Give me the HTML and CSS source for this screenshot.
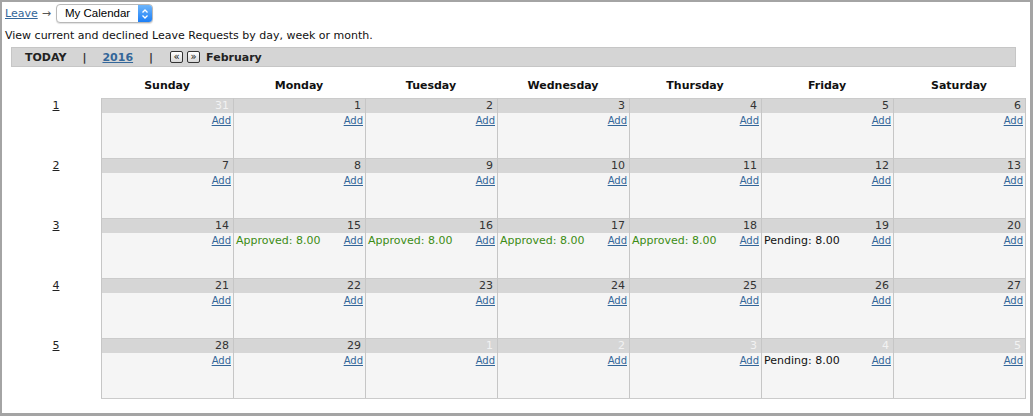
FILE: index.html
```html
<!DOCTYPE html>
<html>
<head>
<meta charset="utf-8">
<link rel="stylesheet" href="styles.css">
</head>
<body>
<div class="frame">
  <div class="crumbs">
    <a href="#" class="link">Leave</a>
    <span class="arrow">→</span>
    <span class="select-wrap">
      <select class="select"><option>My Calendar</option></select>
      <span class="stepper">
        <svg width="14" height="16" viewBox="0 0 14 16"><path d="M4.5 6.5 L7 4 L9.5 6.5" fill="none" stroke="#fff" stroke-width="1.3"/><path d="M4.5 9.5 L7 12 L9.5 9.5" fill="none" stroke="#fff" stroke-width="1.3"/></svg>
      </span>
    </span>
  </div>
  <div class="desc">View current and declined Leave Requests by day, week or month.</div>
  <div class="navbar">
    <span class="nav-item">TODAY</span>
    <span class="pipe">|</span>
    <a href="#" class="nav-item year">2016</a>
    <span class="pipe">|</span>
    <span class="nav-btns">
      <span class="nbtn">«</span>
      <span class="nbtn">»</span>
    </span>
    <span class="nav-item month">February</span>
  </div>

  <div class="cal">
    <div class="row head">
      <div class="wk"></div>
      <div class="days heads">
        <div class="dname">Sunday</div>
        <div class="dname">Monday</div>
        <div class="dname">Tuesday</div>
        <div class="dname">Wednesday</div>
        <div class="dname">Thursday</div>
        <div class="dname">Friday</div>
        <div class="dname">Saturday</div>
      </div>
    </div>

    <div class="row">
      <div class="wk"><a href="#" class="wlink">1</a></div>
      <div class="days">
        <div class="day"><div class="bar other">31</div><div class="body"><span></span><a href="#" class="add">Add</a></div></div>
        <div class="day"><div class="bar">1</div><div class="body"><span></span><a href="#" class="add">Add</a></div></div>
        <div class="day"><div class="bar">2</div><div class="body"><span></span><a href="#" class="add">Add</a></div></div>
        <div class="day"><div class="bar">3</div><div class="body"><span></span><a href="#" class="add">Add</a></div></div>
        <div class="day"><div class="bar">4</div><div class="body"><span></span><a href="#" class="add">Add</a></div></div>
        <div class="day"><div class="bar">5</div><div class="body"><span></span><a href="#" class="add">Add</a></div></div>
        <div class="day"><div class="bar">6</div><div class="body"><span></span><a href="#" class="add">Add</a></div></div>
      </div>
    </div>

    <div class="row">
      <div class="wk"><a href="#" class="wlink">2</a></div>
      <div class="days">
        <div class="day"><div class="bar">7</div><div class="body"><span></span><a href="#" class="add">Add</a></div></div>
        <div class="day"><div class="bar">8</div><div class="body"><span></span><a href="#" class="add">Add</a></div></div>
        <div class="day"><div class="bar">9</div><div class="body"><span></span><a href="#" class="add">Add</a></div></div>
        <div class="day"><div class="bar">10</div><div class="body"><span></span><a href="#" class="add">Add</a></div></div>
        <div class="day"><div class="bar">11</div><div class="body"><span></span><a href="#" class="add">Add</a></div></div>
        <div class="day"><div class="bar">12</div><div class="body"><span></span><a href="#" class="add">Add</a></div></div>
        <div class="day"><div class="bar">13</div><div class="body"><span></span><a href="#" class="add">Add</a></div></div>
      </div>
    </div>

    <div class="row">
      <div class="wk"><a href="#" class="wlink">3</a></div>
      <div class="days">
        <div class="day"><div class="bar">14</div><div class="body"><span></span><a href="#" class="add">Add</a></div></div>
        <div class="day"><div class="bar">15</div><div class="body"><span class="approved">Approved: 8.00</span><a href="#" class="add">Add</a></div></div>
        <div class="day"><div class="bar">16</div><div class="body"><span class="approved">Approved: 8.00</span><a href="#" class="add">Add</a></div></div>
        <div class="day"><div class="bar">17</div><div class="body"><span class="approved">Approved: 8.00</span><a href="#" class="add">Add</a></div></div>
        <div class="day"><div class="bar">18</div><div class="body"><span class="approved">Approved: 8.00</span><a href="#" class="add">Add</a></div></div>
        <div class="day"><div class="bar">19</div><div class="body"><span class="pending">Pending: 8.00</span><a href="#" class="add">Add</a></div></div>
        <div class="day"><div class="bar">20</div><div class="body"><span></span><a href="#" class="add">Add</a></div></div>
      </div>
    </div>

    <div class="row">
      <div class="wk"><a href="#" class="wlink">4</a></div>
      <div class="days">
        <div class="day"><div class="bar">21</div><div class="body"><span></span><a href="#" class="add">Add</a></div></div>
        <div class="day"><div class="bar">22</div><div class="body"><span></span><a href="#" class="add">Add</a></div></div>
        <div class="day"><div class="bar">23</div><div class="body"><span></span><a href="#" class="add">Add</a></div></div>
        <div class="day"><div class="bar">24</div><div class="body"><span></span><a href="#" class="add">Add</a></div></div>
        <div class="day"><div class="bar">25</div><div class="body"><span></span><a href="#" class="add">Add</a></div></div>
        <div class="day"><div class="bar">26</div><div class="body"><span></span><a href="#" class="add">Add</a></div></div>
        <div class="day"><div class="bar">27</div><div class="body"><span></span><a href="#" class="add">Add</a></div></div>
      </div>
    </div>

    <div class="row last">
      <div class="wk"><a href="#" class="wlink">5</a></div>
      <div class="days">
        <div class="day"><div class="bar">28</div><div class="body"><span></span><a href="#" class="add">Add</a></div></div>
        <div class="day"><div class="bar">29</div><div class="body"><span></span><a href="#" class="add">Add</a></div></div>
        <div class="day"><div class="bar other">1</div><div class="body"><span></span><a href="#" class="add">Add</a></div></div>
        <div class="day"><div class="bar other">2</div><div class="body"><span></span><a href="#" class="add">Add</a></div></div>
        <div class="day"><div class="bar other">3</div><div class="body"><span></span><a href="#" class="add">Add</a></div></div>
        <div class="day"><div class="bar other">4</div><div class="body"><span class="pending">Pending: 8.00</span><a href="#" class="add">Add</a></div></div>
        <div class="day"><div class="bar other">5</div><div class="body"><span></span><a href="#" class="add">Add</a></div></div>
      </div>
    </div>
  </div>
</div>
</body>
</html>
```

FILE: styles.css
```css
html, body {
  margin: 0;
  padding: 0;
  background: #ffffff;
}

body {
  font-family: "DejaVu Sans", Verdana, sans-serif;
  font-size: 11px;
  color: #111;
}

.frame {
  box-sizing: border-box;
  width: 1033px;
  height: 416px;
  border-style: solid;
  border-color: #a4a4a4;
  border-width: 2px 3px 3px 2px;
  padding: 2px 0 0 3px;
  overflow: hidden;
}

.crumbs {
  display: flex;
  align-items: center;
  height: 19px;
}

.link {
  color: #336699;
  text-decoration: underline;
  font-size: 11px;
}

.arrow {
  color: #555;
  font-size: 11px;
  margin: 0 5px 0 4px;
}

.select-wrap {
  position: relative;
  display: inline-block;
  height: 19px;
}

.select {
  -webkit-appearance: none;
  appearance: none;
  box-sizing: border-box;
  width: 97px;
  height: 19px;
  margin: 0;
  padding: 0 0 0 8px;
  border: 1px solid #b8b8b8;
  border-radius: 4px;
  background: #fff;
  box-shadow: 0 1px 1px rgba(0, 0, 0, 0.12);
  font-family: "Liberation Sans", Arial, sans-serif;
  font-size: 11.5px;
  color: #000;
  line-height: 17px;
}

.stepper {
  position: absolute;
  top: 1px;
  right: 1px;
  bottom: 1px;
  width: 14px;
  border-radius: 0 3px 3px 0;
  background: linear-gradient(#6db5fb, #1c7ff6);
  display: flex;
  align-items: center;
  justify-content: center;
}

.stepper svg {
  display: block;
}

.desc {
  margin-top: 6px;
  line-height: 14px;
  font-size: 11px;
  color: #111;
}

.navbar {
  box-sizing: border-box;
  margin: 4px 0 0 6px;
  width: 1005px;
  height: 20px;
  background: #d5d5d5;
  border: 1px solid #c6c6c6;
  display: flex;
  align-items: center;
  padding-left: 13px;
  font-weight: bold;
  color: #222;
  gap: 16px;
}

.nav-item {
  font-weight: bold;
  font-size: 11px;
}

.year {
  color: #336699;
  text-decoration: underline;
}

.pipe {
  font-weight: bold;
  color: #333;
}

.nav-btns {
  display: flex;
  gap: 4px;
  margin-left: 1px;
}

.month {
  margin-left: -10px;
}

.nbtn {
  box-sizing: border-box;
  width: 13px;
  height: 12px;
  border: 1px solid #333;
  border-radius: 2px;
  background: linear-gradient(#ffffff, #d8d8d8);
  font-size: 10px;
  line-height: 9px;
  font-weight: normal;
  text-align: center;
  color: #111;
}

.cal {
  margin: 9px 0 0 6px;
}

.row {
  display: flex;
}

.wk {
  width: 90px;
  text-align: center;
  padding-top: 1px;
  line-height: 14px;
}

.wlink {
  color: #222;
  text-decoration: underline;
  font-size: 11px;
}

.days {
  display: grid;
  grid-template-columns: repeat(7, 132px);
  border-right: 1px solid #c6c6c6;
}

.heads {
  border-right: 1px solid transparent;
  height: 22px;
  align-items: center;
}

.dname {
  text-align: center;
  font-weight: bold;
  font-size: 11px;
  color: #111;
  padding-bottom: 3px;
}

.day {
  box-sizing: border-box;
  height: 60px;
  border-top: 1px solid #cbcbcb;
  border-left: 1px solid #c6c6c6;
}

.row.last .days {
  border-bottom: 1px solid #cbcbcb;
}

.bar {
  height: 14px;
  line-height: 14px;
  background: #d6d6d6;
  text-align: right;
  padding-right: 4px;
  font-size: 11px;
  color: #333;
}

.bar.other {
  color: #f2f2f2;
}

.body {
  height: 45px;
  background: #f5f5f5;
  display: flex;
  justify-content: space-between;
  align-items: baseline;
  padding: 1px 2px 0 2px;
  box-sizing: border-box;
  line-height: 14px;
}

.add {
  color: #336699;
  text-decoration: underline;
  font-size: 10px;
}

.approved {
  color: #3c8c14;
  font-size: 11px;
}

.pending {
  color: #111;
  font-size: 11px;
}
```
